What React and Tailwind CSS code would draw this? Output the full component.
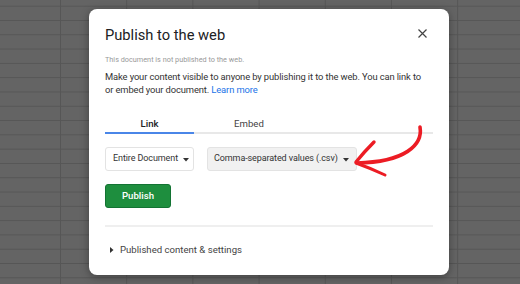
import React from "react";

const Caret = () => (
  <svg width="6" height="4" viewBox="0 0 6 4" className="ml-[5px] mt-[1px] shrink-0">
    <path d="M0 0 L6 0 L3 3.5 Z" fill="#333" />
  </svg>
);

const App = () => {
  return (
    <div
      className="relative w-[520px] h-[284px] overflow-hidden bg-[#646464] bg-[linear-gradient(to_right,#565656_1px,transparent_1px),linear-gradient(to_bottom,#565656_1px,transparent_1px)] [background-size:66.2px_14.3px] [background-position:60px_5.7px] pt-[9px] pl-[89px]"
      style={{ fontFamily: "Roboto, 'Liberation Sans', sans-serif" }}
    >
      {/* dialog */}
      <div className="w-[360px] h-[266px] bg-white rounded-[8px] shadow-[0_2px_8px_rgba(0,0,0,0.35)] pl-[16px] pr-[16px] pt-[16px] text-[#333]">
        <div className="flex items-center justify-between">
          <div className="text-[14.7px] leading-[20px] text-[#202124]">Publish to the web</div>
          <svg width="9" height="9" viewBox="0 0 9 9" className="mr-[6px] mt-[-3px]">
            <path d="M0.5 0.5 L8.5 8.5 M8.5 0.5 L0.5 8.5" stroke="#444" strokeWidth="1.2" />
          </svg>
        </div>

        <div className="mt-[9px] text-[7.3px] leading-[12px] text-[#9a9a9a]">
          This document is not published to the web.
        </div>

        <div className="mt-[5px] text-[9.4px] leading-[12.6px] text-[#333] whitespace-nowrap tracking-[-0.12px]">
          Make your content visible to anyone by publishing it to the web. You can link to
          <br />
          or embed your document. <span className="text-[#1a73e8]">Learn more</span>
        </div>

        {/* tabs */}
        <div className="mt-[21px] flex w-[328px] border-b-2 border-[#e8e8e8]">
          <div className="w-[89px] relative text-center text-[9.6px] leading-[13px] pb-[2px] text-[#202124] font-medium">
            Link
            <div className="absolute left-0 right-0 bottom-[-2px] h-[2px] bg-[#4a86e8]" />
          </div>
          <div className="w-[110px] text-center text-[9.6px] leading-[13px] pb-[2px] text-[#444]">
            Embed
          </div>
        </div>

        {/* selects */}
        <div className="mt-[13px] flex gap-[13px]">
          <div className="w-[89px] h-[24px] flex items-center pl-[7px] border border-[#e3e3e3] rounded-[3px] bg-white text-[9px] tracking-[-0.1px] whitespace-nowrap text-[#333]">
            Entire Document
            <Caret />
          </div>
          <div className="w-[150px] h-[24px] flex items-center pl-[6px] border border-[#e3e3e3] rounded-[3px] bg-[#f1f1f1] text-[9px] tracking-[-0.1px] whitespace-nowrap text-[#333]">
            Comma-separated values (.csv)
            <Caret />
          </div>
        </div>

        {/* publish */}
        <div className="mt-[13px] w-[66px] h-[24px] flex items-center justify-center rounded-[3px] bg-[#1e8e3e] border border-[#137333] text-white text-[9.6px] font-medium">
          Publish
        </div>

        <div className="mt-[17px] w-[328px] h-[2px] bg-[#efefef]" />

        <div className="mt-[16px] flex items-center text-[9.6px] leading-[13px] text-[#444]">
          <svg width="4" height="6" viewBox="0 0 4 6" className="ml-[5px] mr-[6px]">
            <path d="M0 0 L3.5 3 L0 6 Z" fill="#333" />
          </svg>
          Published content &amp; settings
        </div>
      </div>

      {/* hand drawn red arrow over the dialog */}
      <svg
        width="520"
        height="284"
        viewBox="0 0 520 284"
        className="absolute left-0 top-0 pointer-events-none"
      >
        <g fill="none" stroke="#ec1c24" strokeLinecap="round" strokeLinejoin="round">
          <path d="M420 127 C423 145 405 162 357 163" strokeWidth="3.6" />
          <path d="M374 142 Q364 152 356 162" strokeWidth="3.4" />
          <path d="M356 163 Q370 168 385 175" strokeWidth="3" />
        </g>
      </svg>
    </div>
  );
};

export default App;
